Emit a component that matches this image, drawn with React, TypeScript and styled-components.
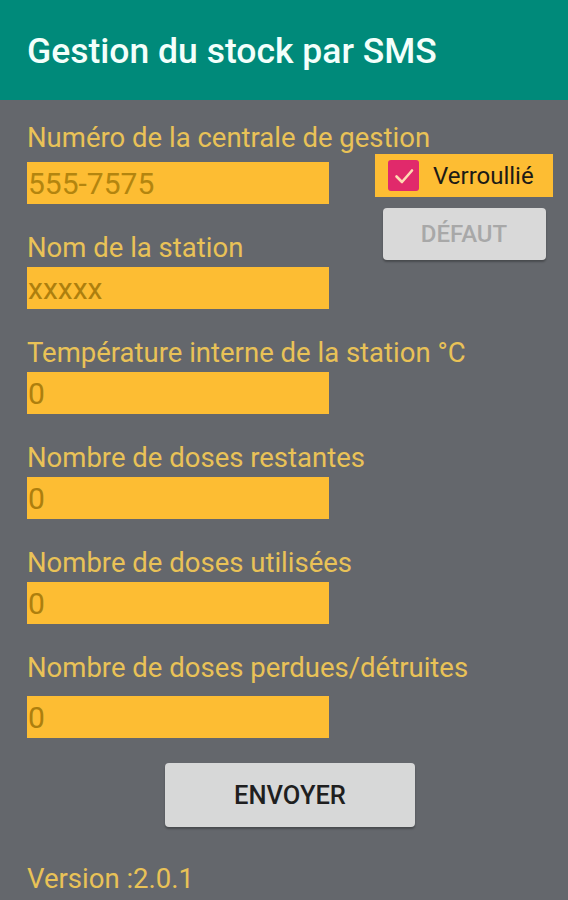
import React from "react";
import styled, { createGlobalStyle } from "styled-components";

const GlobalStyle = createGlobalStyle`
  html, body {
    margin: 0;
    padding: 0;
    background: #64676c;
  }
  body {
    font-family: Roboto, "Noto Sans", "Liberation Sans", sans-serif;
  }
`;

const Screen = styled.div`
  width: 568px;
  min-height: 900px;
  background: #64676c;
  display: flex;
  flex-direction: column;
`;

const AppBar = styled.header`
  height: 100px;
  background: #008a7a;
  display: flex;
  align-items: center;
  padding: 2px 0 0 27px;
  box-sizing: border-box;
`;

const Title = styled.h1`
  margin: 0;
  font-size: 35.5px;
  font-weight: 500;
  color: #f3fffb;
`;

const Form = styled.main`
  display: flex;
  flex-direction: column;
  padding: 22px 15px 0 27px;
`;

const Label = styled.div`
  font-size: 27.5px;
  line-height: 32px;
  color: #e9c257;
  white-space: nowrap;
`;

const Input = styled.input`
  width: 302px;
  height: 42px;
  box-sizing: border-box;
  border: none;
  outline: none;
  padding: 0 0 0 1px;
  margin: 0;
  background: #fdbd33;
  font-family: Roboto, "Noto Sans", sans-serif;
  font-size: 30px;
  color: #ad7f0e;
  &::placeholder {
    color: #b3850f;
  }
`;

const Field = styled.div<{ $gap?: number }>`
  display: flex;
  flex-direction: column;
  gap: ${(p) => p.$gap ?? 3}px;
  margin-top: 28px;
`;

const TopRow = styled.div`
  display: flex;
  align-items: flex-start;
  gap: 46px;
  margin-top: 8px;
`;

const LeftColumn = styled.div`
  display: flex;
  flex-direction: column;
  width: 302px;
`;

const SidePanel = styled.div`
  flex: 1;
  margin-top: -8px;
  display: flex;
  flex-direction: column;
  align-items: center;
  gap: 11px;
`;

const LockBox = styled.label`
  width: 100%;
  height: 43px;
  background: #fdbd33;
  display: flex;
  align-items: center;
  gap: 14px;
  padding-left: 13px;
  box-sizing: border-box;
  font-size: 24px;
  color: #1c1a16;
`;

const CheckMark = styled.span`
  width: 31px;
  height: 31px;
  border-radius: 3px;
  background: #e1296b;
  display: flex;
  align-items: center;
  justify-content: center;
`;

const Button = styled.button<{ $disabled?: boolean }>`
  border: none;
  border-radius: 4px;
  background: ${(p) => (p.$disabled ? "#d9d9d9" : "#d7d8d8")};
  color: ${(p) => (p.$disabled ? "#a8a8a8" : "#1f1f1f")};
  font-family: Roboto, "Noto Sans", sans-serif;
  font-weight: 500;
  font-size: 24px;
  box-shadow: 0 2px 2px rgba(0, 0, 0, 0.28);
  cursor: pointer;
`;

const DefaultButton = styled(Button)`
  width: 163px;
  height: 52px;
`;

const SendButton = styled(Button)`
  align-self: center;
  width: 250px;
  height: 64px;
  margin-top: 25px;
  font-size: 25.5px;
`;

const Version = styled.div`
  margin-top: 35px;
  font-size: 27.5px;
  color: #e9c257;
`;

const fields = [
  { label: "Température interne de la station °C", value: "0" },
  { label: "Nombre de doses restantes", value: "0" },
  { label: "Nombre de doses utilisées", value: "0" },
  { label: "Nombre de doses perdues/détruites", value: "0", gap: 12 },
];

export default function App() {
  return (
    <Screen>
      <GlobalStyle />
      <AppBar>
        <Title>Gestion du stock par SMS</Title>
      </AppBar>
      <Form>
        <Label>Numéro de la centrale de gestion</Label>
        <TopRow>
          <LeftColumn>
            <Input placeholder="555-7575" readOnly />
            <Field>
              <Label>Nom de la station</Label>
              <Input defaultValue="xxxxx" />
            </Field>
          </LeftColumn>
          <SidePanel>
            <LockBox>
              <CheckMark>
                <svg width="22" height="22" viewBox="0 0 22 22">
                  <path
                    d="M3.5 11.5 L9 17 L19 5.5"
                    fill="none"
                    stroke="#ffd9b3"
                    strokeWidth="2.6"
                    strokeLinecap="round"
                    strokeLinejoin="round"
                  />
                </svg>
              </CheckMark>
              Verroullié
            </LockBox>
            <DefaultButton $disabled>DÉFAUT</DefaultButton>
          </SidePanel>
        </TopRow>
        {fields.map((f) => (
          <Field key={f.label} $gap={f.gap}>
            <Label>{f.label}</Label>
            <Input defaultValue={f.value} />
          </Field>
        ))}
        <SendButton>ENVOYER</SendButton>
        <Version>Version :2.0.1</Version>
      </Form>
    </Screen>
  );
}
